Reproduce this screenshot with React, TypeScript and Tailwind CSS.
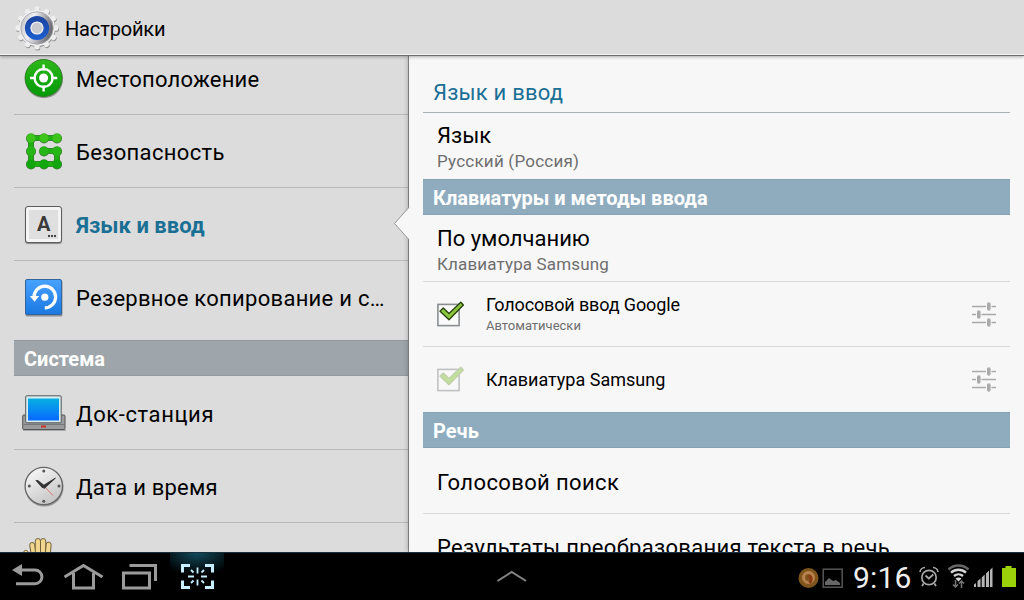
import React from "react";

const teeth = [0, 30, 60, 90, 120, 150];

const GearIcon = () => (
  <svg width="46" height="48" viewBox="0 0 46 48">
    <defs>
      <linearGradient id="metal" x1="0" y1="0" x2="1" y2="0.3">
        <stop offset="0" stopColor="#b4b4ba" />
        <stop offset="0.4" stopColor="#f2f2f6" />
        <stop offset="1" stopColor="#6e6e76" />
      </linearGradient>
      <linearGradient id="ring" x1="0" y1="0" x2="0" y2="1">
        <stop offset="0" stopColor="#1b46a2" />
        <stop offset="1" stopColor="#1c5ccc" />
      </linearGradient>
    </defs>
    <g transform="translate(0.5 1)" fill="#8d8d8d">
      <circle cx="23" cy="24" r="18" />
      {teeth.map((a) => (
        <rect key={a} x="20.3" y="2.5" width="5.4" height="43" rx="2" transform={`rotate(${a} 23 24)`} />
      ))}
    </g>
    <g fill="#eeeeef">
      <circle cx="23" cy="24" r="18" />
      {teeth.map((a) => (
        <rect key={a} x="20.3" y="2.5" width="5.4" height="43" rx="2" transform={`rotate(${a} 23 24)`} />
      ))}
    </g>
    <circle cx="23" cy="24" r="16.2" fill="url(#metal)" stroke="#a5a5a8" strokeWidth="0.8" />
    <circle cx="23" cy="24" r="9.2" fill="none" stroke="url(#ring)" strokeWidth="5.8" />
    <circle cx="23" cy="24" r="6" fill="#c9cbd0" stroke="#f0f0f2" strokeWidth="1.2" />
  </svg>
);

const LocationIcon = () => (
  <svg width="44" height="44" viewBox="0 0 44 44">
    <defs>
      <linearGradient id="loc" x1="0" y1="0" x2="0" y2="1">
        <stop offset="0" stopColor="#2fb81a" />
        <stop offset="1" stopColor="#039a08" />
      </linearGradient>
    </defs>
    <circle cx="22" cy="23.3" r="19" fill="#8f948f" />
    <circle cx="21.6" cy="22" r="18.5" fill="url(#loc)" stroke="#2c7d22" />
    <g fill="none" stroke="#fff" strokeWidth="2.4">
      <circle cx="21.6" cy="22" r="9" />
      <path d="M21.600 8.500v6M21.600 29.500v6M8 22h6M29.200 22h6" />
    </g>
    <circle cx="21.600" cy="22" r="4.500" fill="#fff" />
  </svg>
);

const dots = [5, 18, 31];

const SecurityIcon = () => (
  <svg className="mr-px" width="36" height="37" viewBox="0 0 36 37">
    <path d="M31 5H5v26h26V18H18" fill="none" stroke="#3c7a35" strokeWidth="6" />
    {dots.map((y) => dots.map((x) => <circle key={`${x}-${y}`} cx={x} cy={y + 0.4} r="5" fill="#3c7a35" />))}
    <path d="M31 5H5v26h26V18H18" fill="none" stroke="#20b012" strokeWidth="4.500" />
    {dots.map((y) => dots.map((x) => <circle key={`${x}-${y}`} cx={x} cy={y} r="4.500" fill={y < 10 ? "#3cc41a" : y < 20 ? "#26b616" : "#10a60c"} />))}
  </svg>
);

const KeyIcon = () => (
  <div className="relative -ml-px h-[37px] w-[37px] rounded-[3px] border border-[#5c5c5c] bg-[#dfdfdf] shadow-[0_1px_1px_#888,inset_0_0_0_3px_#f4f4f4]">
    <span className="absolute left-[11px] top-[5px] text-[20px] font-bold leading-[24px] text-[#3a3a3a]">A</span>
    <span className="absolute bottom-[5px] right-[5px] flex gap-px">
      <i className="h-[2px] w-[2px] bg-[#444]" />
      <i className="h-[2px] w-[2px] bg-[#444]" />
      <i className="h-[2px] w-[2px] bg-[#444]" />
    </span>
  </div>
);

const BackupIcon = () => (
  <svg width="44" height="44" viewBox="0 0 44 44">
    <defs>
      <linearGradient id="bak" x1="0" y1="0" x2="0" y2="1">
        <stop offset="0" stopColor="#48a2ff" />
        <stop offset="1" stopColor="#1a78e0" />
      </linearGradient>
    </defs>
    <rect x="3.500" y="4.500" width="37" height="36" rx="1.500" fill="#8c9096" />
    <rect x="3.500" y="3.500" width="36" height="35" rx="1.500" fill="url(#bak)" stroke="#33659d" />
    <path d="M12 21a10.800 10.800 0 1 1 10.800 10.800" fill="none" stroke="#fff" strokeWidth="3.200" />
    <path d="M7.800 20h9.400l-4.700 5.800z" fill="#fff" />
    <circle cx="22.800" cy="21.200" r="3.600" fill="#fff" />
  </svg>
);

const DockIcon = () => (
  <svg width="44" height="44" viewBox="0 0 44 44">
    <defs>
      <linearGradient id="scr" x1="0" y1="0" x2="0" y2="1">
        <stop offset="0" stopColor="#08b0e2" />
        <stop offset="1" stopColor="#0668ff" />
      </linearGradient>
    </defs>
    <path d="M1 39.300h43" stroke="#aaa" strokeWidth="1.600" />
    <rect x="0.700" y="24" width="42.300" height="14.500" rx="1" fill="#999b9c" stroke="#555" />
    <path d="M1.500 33.500h41" stroke="#777" />
    <rect x="3.700" y="4.800" width="35.500" height="27" rx="1" fill="#d4eef2" stroke="#555" />
    <rect x="6" y="7.500" width="31" height="22" fill="url(#scr)" />
    <rect x="19" y="34.500" width="5" height="2" fill="#c8342c" />
  </svg>
);

const ClockIcon = () => (
  <svg width="44" height="44" viewBox="0 0 44 44">
    <defs>
      <linearGradient id="clk" x1="0" y1="0" x2="0.6" y2="1">
        <stop offset="0" stopColor="#fdfdfd" />
        <stop offset="1" stopColor="#c6c6c6" />
      </linearGradient>
    </defs>
    <circle cx="22.300" cy="23.300" r="19.300" fill="#999" />
    <circle cx="21.800" cy="22" r="18.700" fill="url(#clk)" stroke="#666" strokeWidth="1.300" />
    <g fill="#555">
      <circle cx="21.800" cy="7" r="1.500" />
      <circle cx="21.800" cy="37.200" r="1.500" />
      <circle cx="7.300" cy="22" r="1.500" />
      <circle cx="37" cy="22" r="1.500" />
    </g>
    <path d="M20 20l11 11.500" stroke="#d87070" />
    <path d="M13.300 16.200l2.500-.3 6 4.800L33.500 13.500l.3.700L22.500 24.700l-2.500-1z" fill="#333" />
  </svg>
);

const HandIcon = () => (
  <svg width="44" height="44" viewBox="0 0 44 44" fill="#f1d690" stroke="#6b5830" strokeWidth="0.9">
    <path d="M5 16c-1-3 3-4 5 0l3 6-4 3z" />
    <rect x="12" y="5.500" width="5" height="22" rx="2.500" transform="rotate(-9 14 16)" />
    <rect x="16.300" y="1.500" width="5.200" height="22" rx="2.600" />
    <rect x="21.500" y="1.500" width="5.200" height="22" rx="2.600" />
    <rect x="26.400" y="5" width="5" height="20" rx="2.500" transform="rotate(5 28 16)" />
  </svg>
);

const SlidersIcon = () => (
  <svg className="ml-auto mr-[13px] shrink-0" width="26" height="26" viewBox="0 0 26 26" stroke="#aaa" fill="none">
    <path d="M1 5.500h14M20.500 5.500H25M1 13.500h4M10.500 13.500H25M1 21.500h14M20.500 21.500H25" strokeWidth="1.300" />
    <path d="M17.800 3v5M7.800 11v5M17.800 19v5" strokeWidth="3.600" strokeLinecap="round" />
  </svg>
);

const CheckIcon = ({ faded }: { faded?: boolean }) => (
  <svg width="30" height="28" viewBox="0 0 30 28" className={faded ? "opacity-50" : ""}>
    <rect x="1.900" y="4.400" width="21.200" height="21.200" fill="#fafafa" stroke="#8b8f92" strokeWidth="1.600" />
    <path d="M4 11.200l3.300-3.200 5.700 5.500L24.800 2.300l2.600 2.700L13 19.800z" fill="#8dc63f" stroke={faded ? "#8fae68" : "#26400c"} strokeWidth="1.300" strokeLinejoin="round" />
  </svg>
);

const MenuRow = ({ icon, text, cls }: { icon: React.ReactNode; text: string; cls: string }) => (
  <div className="flex h-[73px] shrink-0 items-center border-b border-[#b9b9b9] pl-2 last:border-0">
    <div className="flex w-11 shrink-0 justify-center">{icon}</div>
    <span className={`ml-[10px] mt-0.5 whitespace-nowrap text-[22px] ${cls}`}>{text}</span>
  </div>
);

const Section = ({ children }: { children: React.ReactNode }) => (
  <div className="flex h-9 shrink-0 items-center border-y border-[#84a2b3] bg-[#8facbf] pl-[10px] pt-0.5 text-[20px] font-bold text-white">
    {children}
  </div>
);

const NavBar = () => (
  <div className="flex h-12 items-center border-t border-[#16323e] bg-black">
    <svg width="260" height="47" viewBox="0 0 260 47" fill="none">
      <defs>
        <radialGradient id="glow" cx="0.5" cy="0" r="0.75">
          <stop offset="0" stopColor="#124a5c" />
          <stop offset="1" stopColor="#000" />
        </radialGradient>
      </defs>
      <rect x="170" y="0" width="54" height="30" fill="url(#glow)" />
      <g stroke="#9b9b9b" strokeWidth="3">
        <path d="M20 17h15a6.700 6.700 0 0 1 0 13.800H16" />
        <path d="M12 17l10-6v12z" fill="#9b9b9b" stroke="none" />
        <path d="M64.500 24L83.500 12.500l19 11.500" />
        <path d="M73.500 20v15h20V20" />
        <path d="M129.500 12.500h26V28" />
        <rect x="123.500" y="20" width="26" height="15" />
      </g>
      <g stroke="#c8efff" strokeWidth="3">
        <path d="M190 12.500h-7.500v7M205 12.500h7.500v7M190 34.500h-7.500v-7M205 34.500h7.500v-7" />
        <path d="M197.500 14.500v6M197.500 26.500v6M188 23.500h6M201 23.500h6" strokeWidth="1.800" />
        <path d="M191 17l2.500 2.500M204 17l-2.500 2.500M191 30l2.500-2.500M204 30l-2.500-2.500" strokeWidth="1.800" />
      </g>
    </svg>
    <svg className="ml-[236px]" width="32" height="14" viewBox="0 0 32 14" fill="none" stroke="#858585" strokeWidth="2">
      <path d="M1.500 11L15.700 2 30 11" />
    </svg>
    <div className="ml-auto flex h-full items-center">
      <svg width="48" height="24" viewBox="0 0 48 24" fill="none">
        <circle cx="11.500" cy="13" r="10" fill="#80551c" />
        <circle cx="11.500" cy="12.500" r="5" stroke="#b8834f" strokeWidth="3" />
        <path d="M11.500 11.500c3.500 0 3.500 3.500 1 6.500" stroke="#8a3a12" strokeWidth="3" />
        <rect x="26.200" y="4.200" width="19" height="18" stroke="#555" strokeWidth="1.500" />
        <path d="M28 20v-3l4-4 4 3 3-1 4 3v2z" fill="#666" />
      </svg>
      <span className="ml-2 mt-0.5 w-[60px] text-[30px] leading-none tracking-[0.2px] text-[#eee]">9:16</span>
      <svg className="mb-0.5 ml-1 mr-px" width="106" height="32" viewBox="0 0 106 32" fill="none">
        <g stroke="#a8a8a8" strokeWidth="1.700">
          <circle cx="12" cy="17.500" r="7.200" />
          <path d="M8.500 15.500l3.300 3 4.500-4M3 12a5 5 0 0 1 5-4.500M21 12a5 5 0 0 0-5-4.500M6.500 23.500L5 26M17.500 23.500L19 26" />
        </g>
        <path d="M31.500 9.500a14.500 14.500 0 0 1 20 0" stroke="#666" strokeWidth="2.600" />
        <g stroke="#d6d6d6" strokeWidth="2.400">
          <path d="M34 12.700a11 11 0 0 1 15 0M37 16a7 7 0 0 1 9 0" />
        </g>
        <path d="M38.500 18.500q3-2 6 0l-3 3z" fill="#d6d6d6" />
        <path d="M38.500 20v7M36 24.500l2.500 2.500 2.500-2.500M44.500 28v-7M42 23.500l2.500-2.500 2.500 2.500" stroke="#777" strokeWidth="1.500" />
        <path d="M57 27v-2.500l2-1.500v4zM60.500 27v-6l3-2.500V27zM64.700 27V17.500l3-3V27zM69 27V13.500l3-3V27zM73 27V10l2.500-2.500V27z" fill="#b5b5b5" />
        <path d="M85 8h3.500V6h6v2h4.500v19H85z" fill="#9bd20a" />
      </svg>
    </div>
  </div>
);

const App = () => {
  return (
    <div className="flex h-[600px] w-[1024px] flex-col overflow-hidden bg-[#dcdcdc] font-[Roboto,sans-serif] text-black">
      <header className="relative z-10 flex h-14 shrink-0 items-center border-b border-[#6f6f6f] pl-[14px] shadow-[inset_0_-1px_0_#f2f2f2,0_1px_3px_rgba(0,0,0,0.3)]">
        <GearIcon />
        <h1 className="ml-[5px] mt-0.5 text-[20px] tracking-[-0.15px]">Настройки</h1>
      </header>
      <div className="flex h-[496px] shrink-0 overflow-hidden">
        <aside className="-mt-[14px] flex h-[510px] w-[409px] shrink-0 flex-col overflow-hidden border-r border-[#909090] pl-[14px]">
          <MenuRow icon={<LocationIcon />} text="Местоположение" cls="tracking-[0.2px]" />
          <MenuRow icon={<SecurityIcon />} text="Безопасность" cls="tracking-[0.33px]" />
          <MenuRow icon={<KeyIcon />} text="Язык и ввод" cls="font-bold text-[#1a6f95]" />
          <div className="h-[79px] shrink-0">
            <MenuRow icon={<BackupIcon />} text="Резервное копирование и с…" cls="tracking-[0.28px]" />
          </div>
          <div className="mb-px flex h-9 shrink-0 items-center border-y border-[#939a9f] bg-[#9ea6ab] pl-[10px] pt-0.5 text-[20px] font-bold text-white">
            Система
          </div>
          <MenuRow icon={<DockIcon />} text="Док-станция" cls="tracking-[0.6px]" />
          <MenuRow icon={<ClockIcon />} text="Дата и время" cls="tracking-[0.2px]" />
          <div className="flex shrink-0 pl-[5px] pt-[14px]">
            <HandIcon />
          </div>
        </aside>
        <main className="relative flex flex-1 flex-col bg-[#f7f7f7] px-[14px] shadow-[-2px_0_4px_rgba(0,0,0,0.18)]">
          {/* pointer to the selected menu row */}
          <svg className="absolute -left-4 top-[151px]" width="17" height="34" viewBox="0 0 17 34">
            <path d="M17 0.500h-1L1.500 16.500 16 32.500h1z" fill="#f7f7f7" />
            <path d="M15.800 0.500L1.500 16.500l14.300 16" fill="none" stroke="#979797" />
          </svg>
          <h2 className="h-[57px] shrink-0 border-b border-[#a9b0b3] pl-[10px] pt-[20px] text-[22px] tracking-[0.2px] text-[#1a6f95]">
            Язык и ввод
          </h2>
          <div className="h-[66px] shrink-0 pl-[14px] pt-[7px]">
            <p className="text-[22px] leading-8">Язык</p>
            <p className="-mt-px text-[17px] leading-5 tracking-[0.22px] text-[#6e6e6e]">Русский (Россия)</p>
          </div>
          <Section>Клавиатуры и методы ввода</Section>
          <div className="h-[67px] shrink-0 border-b border-[#dadada] pl-[14px] pt-2">
            <p className="text-[22px] leading-8">По умолчанию</p>
            <p className="-mt-px text-[17px] leading-5 tracking-[0.15px] text-[#6e6e6e]">Клавиатура Samsung</p>
          </div>
          <div className="flex h-[65px] shrink-0 items-center border-b border-[#dadada] pl-[13px]">
            <CheckIcon />
            <div className="-mt-px ml-5">
              <p className="text-[18px] leading-6 tracking-[-0.13px]">Голосовой ввод Google</p>
              <p className="mt-px text-[13px] leading-4 text-[#6e6e6e]">Автоматически</p>
            </div>
            <SlidersIcon />
          </div>
          <div className="flex h-[65px] shrink-0 items-center pb-px pl-[13px]">
            <CheckIcon faded />
            <p className="ml-5 text-[18px]">Клавиатура Samsung</p>
            <SlidersIcon />
          </div>
          <Section>Речь</Section>
          <div className="flex h-[66px] shrink-0 items-center border-b border-[#dadada] pl-[14px] pt-1 text-[22px] tracking-[0.38px]">
            Голосовой поиск
          </div>
          <div className="flex h-[66px] shrink-0 items-center whitespace-nowrap pl-[14px] text-[22px] tracking-[0.31px]">
            Результаты преобразования текста в речь
          </div>
        </main>
      </div>
      <NavBar />
    </div>
  );
};

export default App;
